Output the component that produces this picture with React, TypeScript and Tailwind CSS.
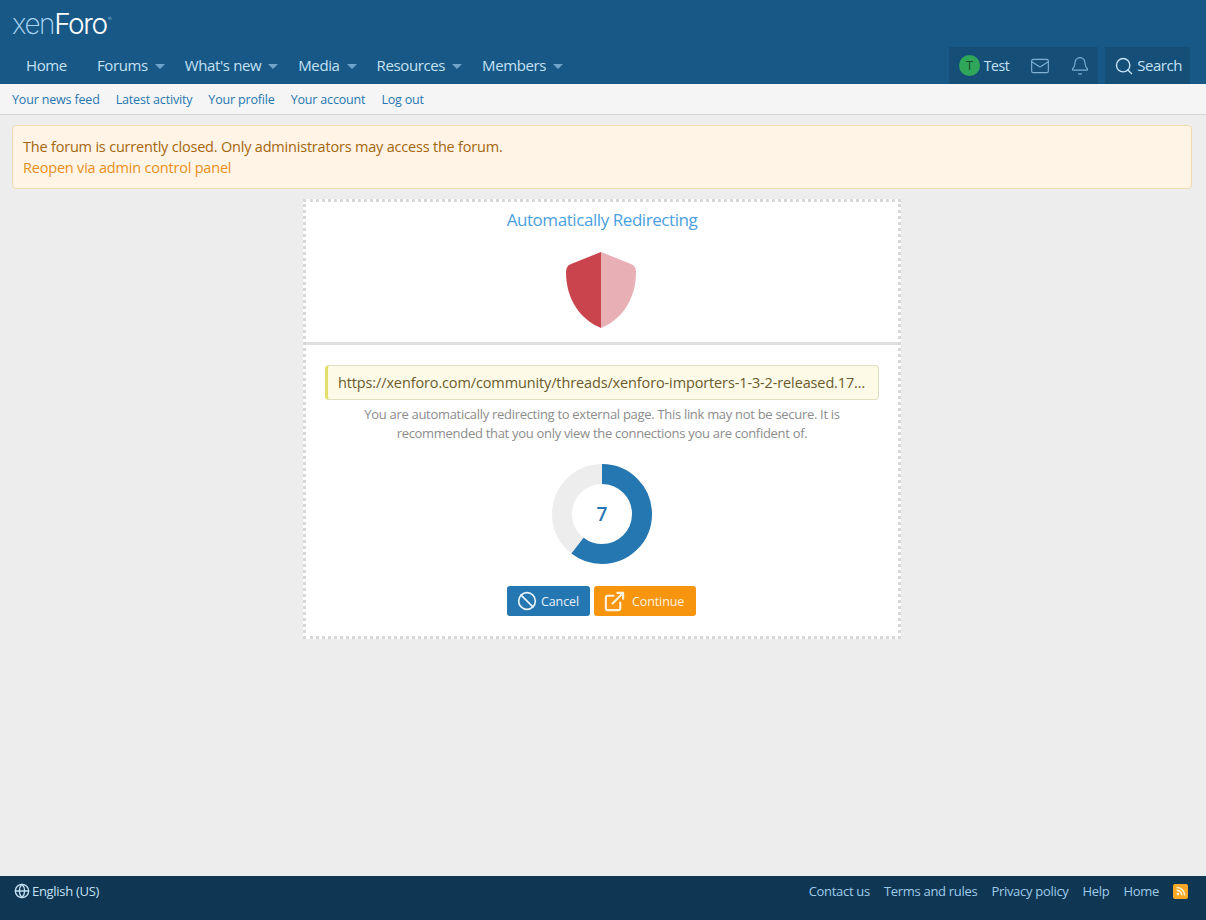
import { Ban, Bell, ExternalLink, Globe, Mail, Search } from 'lucide-react'
import { FaRss } from 'react-icons/fa'

const navItems = [
  { label: 'Home', menu: false },
  { label: 'Forums', menu: true },
  { label: "What's new", menu: true },
  { label: 'Media', menu: true },
  { label: 'Resources', menu: true },
  { label: 'Members', menu: true },
]

const subLinks = ['Your news feed', 'Latest activity', 'Your profile', 'Your account', 'Log out']
const footerLinks = ['Contact us', 'Terms and rules', 'Privacy policy', 'Help', 'Home']

function Logo() {
  return (
    <div className="flex h-[47px] items-center pl-[12px] font-['Inter',sans-serif] text-[28px] leading-none font-extralight tracking-[-1.4px]">
      <span className="text-[#a8d4f2]">xen</span>
      <span className="font-light text-white">Foro</span>
      <span className="mb-[10px] ml-[1px] text-[6px] text-[#a8d4f2]">®</span>
    </div>
  )
}

function Shield() {
  return (
    <svg width="72" height="76" viewBox="0 0 72 76">
      <path d="M36 0 L6 12 Q1 14 1 20 C1 48 16 68 36 76 Z" fill="#c9444c" />
      <path d="M36 0 L66 12 Q71 14 71 20 C71 48 56 68 36 76 Z" fill="#e8b0b4" />
    </svg>
  )
}

function Countdown() {
  return (
    <div className="relative mt-[21px] h-[100px] w-[100px]">
      <svg width="100" height="100" viewBox="0 0 100 100">
        <circle cx="50" cy="50" r="40" fill="none" stroke="#ededed" strokeWidth="20" />
        <circle
          cx="50"
          cy="50"
          r="40"
          fill="none"
          stroke="#2577b1"
          strokeWidth="20"
          strokeDasharray="151.8 251.3"
          transform="rotate(-90 50 50)"
        />
      </svg>
      <div className="absolute inset-0 flex items-center justify-center pt-[1px] text-[19px] font-semibold text-[#2577b1]">
        7
      </div>
    </div>
  )
}

export default function App() {
  return (
    <div className="flex min-h-screen flex-col bg-[#ededed] font-['Open_Sans',sans-serif] text-[13px] text-[#141414]">
      <header className="bg-[#185886]">
        <Logo />
        <div className="flex h-[37px] items-stretch justify-between pr-[16px] pl-[11px]">
          <nav className="flex items-center text-[15px] tracking-[-0.38px] text-[#c4e1f5]">
            {navItems.map((item) => (
              <div key={item.label} className={item.menu ? 'flex items-center pr-[5px] pl-[15px]' : 'flex items-center px-[15px]'}>
                <span>{item.label}</span>
                {item.menu && (
                  <span className="mt-[1px] ml-[7px] h-0 w-0 border-x-[5px] border-t-[5px] border-x-transparent border-t-[#6fa5ca]" />
                )}
              </div>
            ))}
          </nav>
          <div className="flex gap-[7px] text-[15px] tracking-[-0.45px] text-[#c4e1f5]">
            <div className="flex items-center bg-[#154f78] pl-[10px] text-[14px]">
              <span className="flex h-[21px] w-[21px] items-center justify-center rounded-full bg-[#2fa65a] text-[13px] text-[#1b4a2e]">
                T
              </span>
              <span className="ml-[4px]">Test</span>
              <Mail size={20} strokeWidth={1.4} className="ml-[21px] text-[#7fb0d4]" />
              <Bell size={20} strokeWidth={1.4} className="mr-[8px] ml-[20px] text-[#7fb0d4]" />
            </div>
            <div className="flex items-center gap-[3px] bg-[#154f78] pr-[8px] pl-[9px]">
              <Search size={20} strokeWidth={1.7} />
              <span>Search</span>
            </div>
          </div>
        </div>
      </header>

      <div className="flex h-[31px] items-center gap-[16px] border-b border-[#d4d4d4] bg-[#f5f5f5] pt-[2px] pl-[12px] text-[12.5px] tracking-[-0.17px] text-[#2577b1]">
        {subLinks.map((link) => (
          <span key={link}>{link}</span>
        ))}
      </div>

      <main className="flex flex-1 flex-col pt-[10px] pr-[14px] pl-[12px]">
        <div className="h-[64px] rounded-[4px] border border-[#f3d9b0] bg-[#fff4e5] px-[10px] pt-[10px] text-[14.5px] leading-[21px] tracking-[-0.2px] text-[#a5660c]">
          <div>The forum is currently closed. Only administrators may access the forum.</div>
          <div className="text-[#ea8f1a]">Reopen via admin control panel</div>
        </div>

        <div className="mt-[10px] flex h-[440px] w-[598px] flex-col self-center border-[3px] border-dotted border-[#d8d8d8] bg-white">
          <div className="flex h-[143px] flex-col items-center border-b-[3px] border-[#dfdfdf] pt-[6px]">
            <h1 className="text-[17px] leading-[24px] font-normal tracking-[-0.43px] text-[#4a9fe0]">
              Automatically Redirecting
            </h1>
            <div className="mt-[20px] mr-[2px]">
              <Shield />
            </div>
          </div>

          <div className="flex flex-1 flex-col items-center px-[19px] pt-[20px]">
            <div className="flex h-[35px] w-full items-center rounded-[4px] border border-l-[3px] border-[#dfdfc0] border-l-[#e2df6a] bg-[#fdfbe8] pl-[10px] text-[14.5px] tracking-[-0.13px] text-[#6b5a2c]">
              <span className="truncate">https://xenforo.com/community/threads/xenforo-importers-1-3-2-released.17...</span>
            </div>
            <p className="mt-[5px] w-[500px] text-center text-[13px] leading-[19px] tracking-[-0.3px] text-[#8c8c8c]">
              You are automatically redirecting to external page. This link may not be secure. It is recommended that you only view the connections you are confident of.
            </p>

            <Countdown />

            <div className="mt-[22px] mr-[1px] flex gap-[4px] text-[12.5px] tracking-[-0.1px] text-[#e8f2fa]">
              <button className="flex h-[30px] w-[83px] items-center gap-[4px] rounded-[3px] bg-[#2577b1] pl-[10px]">
                <Ban size={20} strokeWidth={2} />
                <span className="mt-[2px]">Cancel</span>
              </button>
              <button className="flex h-[30px] w-[102px] items-center gap-[6px] rounded-[3px] bg-[#f7950e] pl-[9px] text-[#fff3e0]">
                <ExternalLink size={23} strokeWidth={2.2} />
                <span className="mt-[2px]">Continue</span>
              </button>
            </div>
          </div>
        </div>
      </main>

      <footer className="flex h-[44px] items-start justify-between bg-[#0f3652] pt-[6px] pr-[18px] pl-[14px] text-[13px] leading-[18px] tracking-[-0.3px] text-[#9fcbea]">
        <div className="flex items-center gap-[2px] text-[#c4e1f5]">
          <Globe size={16} strokeWidth={2} />
          <span>English (US)</span>
        </div>
        <div className="flex items-center gap-[14px]">
          {footerLinks.map((link) => (
            <span key={link}>{link}</span>
          ))}
          <span className="flex h-[15px] w-[15px] items-center justify-center rounded-[2px] bg-[#f9a825] text-[#fff3d6]">
            <FaRss size={10} />
          </span>
        </div>
      </footer>
    </div>
  )
}
